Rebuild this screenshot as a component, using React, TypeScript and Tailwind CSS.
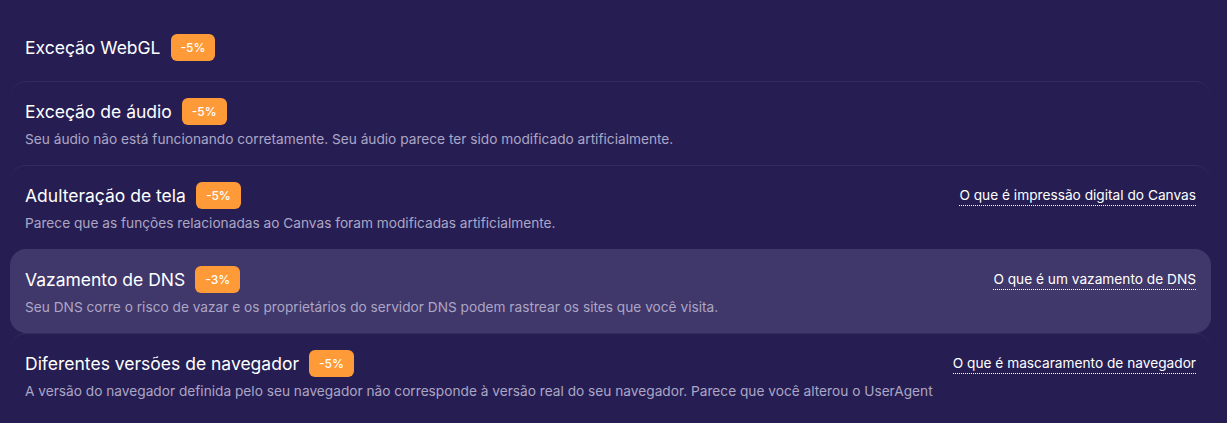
import React from "react";

type Item = {
  title: string;
  badge: string;
  desc?: string;
  link?: string;
  active?: boolean;
};

const items: Item[] = [
  { title: "Exceção WebGL", badge: "-5%" },
  {
    title: "Exceção de áudio",
    badge: "-5%",
    desc: "Seu áudio não está funcionando corretamente. Seu áudio parece ter sido modificado artificialmente.",
  },
  {
    title: "Adulteração de tela",
    badge: "-5%",
    desc: "Parece que as funções relacionadas ao Canvas foram modificadas artificialmente.",
    link: "O que é impressão digital do Canvas",
  },
  {
    title: "Vazamento de DNS",
    badge: "-3%",
    desc: "Seu DNS corre o risco de vazar e os proprietários do servidor DNS podem rastrear os sites que você visita.",
    link: "O que é um vazamento de DNS",
    active: true,
  },
  {
    title: "Diferentes versões de navegador",
    badge: "-5%",
    desc: "A versão do navegador definida pelo seu navegador não corresponde à versão real do seu navegador. Parece que você alterou o UserAgent",
    link: "O que é mascaramento de navegador",
  },
];

const Row = ({ item, first }: { item: Item; first: boolean }) => {
  return (
    <div
      className={`rounded-2xl px-[15px] pt-4 ${item.desc ? "pb-4" : "pb-[20px]"} ${
        first ? "" : "border-t border-[#ffffff10]"
      } ${item.active ? "bg-[#40376a] border-transparent" : ""}`}
    >
      <div className="flex h-[27px] items-center justify-between">
        <div className="flex items-center gap-[10px]">
          <span className="text-[17.5px] leading-[22px] text-white">{item.title}</span>
          <span className="h-[27px] px-[10px] rounded-md bg-[#fe9a37] text-white text-[12px] font-medium flex items-center">
            {item.badge}
          </span>
        </div>
        {item.link && (
          <a className="text-[13.7px] leading-[20px] text-white border-b border-dotted border-white cursor-pointer">
            {item.link}
          </a>
        )}
      </div>
      {item.desc && (
        <p className="mt-1 text-[13.7px] leading-[20px] text-[#aca6c6]">{item.desc}</p>
      )}
    </div>
  );
};

export default function App() {
  return (
    <div
      className="w-[1227px] h-[423px] bg-[#261e52] px-[10px] pt-[18px] overflow-hidden"
      style={{ fontFamily: "Inter, 'Noto Sans', sans-serif" }}
    >
      <div className="w-[1201px] flex flex-col">
        {items.map((item, i) => (
          <Row key={item.title} item={item} first={i === 0} />
        ))}
      </div>
    </div>
  );
}
